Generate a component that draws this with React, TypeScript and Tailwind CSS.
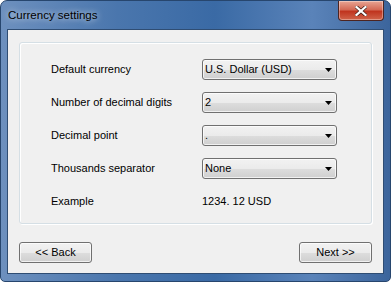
import { ReactNode } from "react";

const font = { fontFamily: '"Segoe UI", "Liberation Sans", Arial, sans-serif' };

function Select({ value }: { value: string }) {
  return (
    <div className="relative flex h-[21px] w-[135px] items-center rounded-[3px] border border-[#707070] bg-[linear-gradient(to_bottom,#f2f2f2_0%,#ebebeb_50%,#dddddd_51%,#cfcfcf_100%)] pl-[2px] text-[11px] text-black shadow-[inset_0_0_0_1px_rgba(255,255,255,0.7)]">
      <span>{value}</span>
      <svg className="absolute right-[4px] top-[8px]" width="7" height="4" viewBox="0 0 7 4">
        <path d="M0 0h7L3.5 4z" fill="#000" />
      </svg>
    </div>
  );
}

function Row({ label, children }: { label: string; children: ReactNode }) {
  return (
    <div className="flex h-[21px] items-center">
      <div className="w-[151px] text-[11px] text-black">{label}</div>
      {children}
    </div>
  );
}

function Button({ children }: { children: ReactNode }) {
  return (
    <button className="flex h-[21px] w-[73px] items-center justify-center rounded-[3px] border border-[#707070] bg-[linear-gradient(to_bottom,#f2f2f2_0%,#ebebeb_50%,#dddddd_51%,#cfcfcf_100%)] text-[11px] text-black shadow-[inset_0_0_0_1px_rgba(255,255,255,0.7)]">
      {children}
    </button>
  );
}

export default function App() {
  return (
    <div style={font} className="flex h-[282px] w-[391px] flex-col overflow-hidden rounded-t-[7px] rounded-b-[5px] border border-[#27466e] bg-[linear-gradient(to_right,#6d90be_0%,#4a76ad_30%,#3a6aa5_55%,#5a83b9_80%,#3c659c_100%)]">
      {/* title bar */}
      <div className="flex h-[28px] shrink-0 items-start justify-between">
        <div className="pl-[7px] pt-[6px] text-[11.5px] text-black [text-shadow:0_0_6px_rgba(255,255,255,0.9)]">
          Currency settings
        </div>
        <div className="mr-[6px] flex h-[20px] w-[46px] items-center justify-center rounded-b-[4px] border border-t-0 border-[#4d2420] bg-[linear-gradient(to_bottom,#e8a594_0%,#d46a56_45%,#c0351f_55%,#d0644a_100%)] shadow-[inset_0_0_0_1px_rgba(255,255,255,0.35)]">
          <svg width="12" height="10" viewBox="0 0 12 10">
            <path d="M1.5 1L10.5 9M10.5 1L1.5 9" stroke="#3a1a14" strokeWidth="3.6" strokeLinecap="square" />
            <path d="M1.5 1L10.5 9M10.5 1L1.5 9" stroke="#fff" strokeWidth="2.2" strokeLinecap="square" />
          </svg>
        </div>
      </div>

      {/* client area */}
      <div className="mx-[6px] mb-[7px] flex flex-1 flex-col border border-[#2f4d73] bg-[#f0f0f0] px-[11px] pt-[12px]">
        <div className="flex h-[182px] flex-col gap-[12px] rounded-[3px] border border-[#d5dfe5] pl-[31px] pt-[16px] shadow-[inset_1px_1px_0_#fff,1px_1px_0_#fff]">
          <Row label="Default currency">
            <Select value="U.S. Dollar (USD)" />
          </Row>
          <Row label="Number of decimal digits">
            <Select value="2" />
          </Row>
          <Row label="Decimal point">
            <Select value="." />
          </Row>
          <Row label="Thousands separator">
            <Select value="None" />
          </Row>
          <Row label="Example">
            <div className="text-[11px] text-black">1234. 12 USD</div>
          </Row>
        </div>
        <div className="mt-[18px] flex justify-between">
          <Button>&lt;&lt; Back</Button>
          <Button>Next &gt;&gt;</Button>
        </div>
      </div>
    </div>
  );
}
